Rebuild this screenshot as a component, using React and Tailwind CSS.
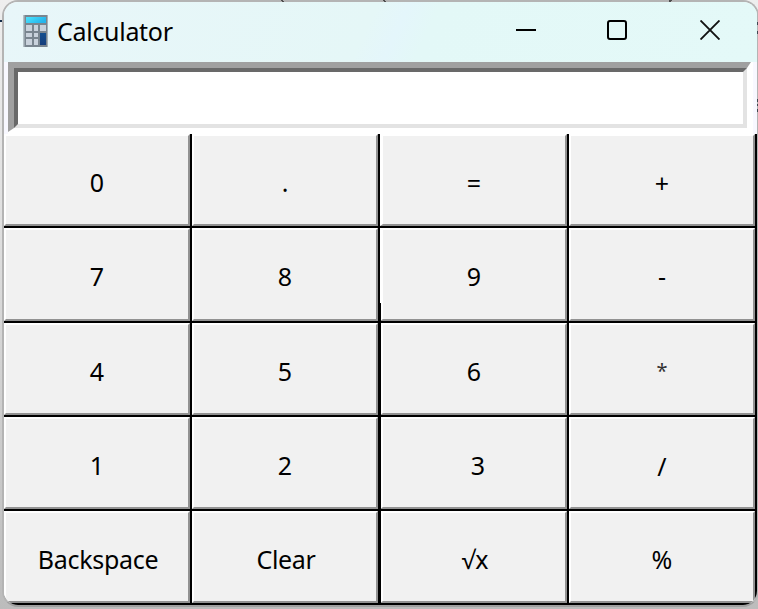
const ROWS = [
  ["0", ".", "=", "+"],
  ["7", "8", "9", "-"],
  ["4", "5", "6", "*"],
  ["1", "2", "3", "/"],
  ["Backspace", "Clear", "√x", "%"],
];

const LABEL_STYLES = {
  "3": "pl-2 pt-[3px] text-[25px]",
  "√x": "pl-[2px] pt-[3px] text-[25px]",
  "*": "pt-1 text-[20px] text-[#333]",
  "=": "pt-[5px] text-[25px]",
  "+": "pt-[5px] text-[25px]",
  "/": "pt-[5px] text-[25px]",
  Backspace: "pl-[2px] pt-[3px] text-[25px] tracking-[-0.3px]",
  Clear: "pl-[2px] pt-[3px] text-[25px] tracking-[-0.3px]",
};

function CalculatorIcon() {
  return (
    <svg width="26" height="33" viewBox="0 0 26 33" className="shrink-0">
      <defs>
        <linearGradient id="screen" x1="0" y1="0" x2="1" y2="0.4">
          <stop offset="0" stopColor="#4be3fd" />
          <stop offset="1" stopColor="#25b5ec" />
        </linearGradient>
        <linearGradient id="equals" x1="0" y1="0" x2="0" y2="1">
          <stop offset="0" stopColor="#14508f" />
          <stop offset="1" stopColor="#153e7c" />
        </linearGradient>
      </defs>
      <rect x="0.5" y="0" width="24.5" height="32" fill="#79858f" />
      <rect x="0.5" y="0" width="1" height="32" fill="#b5c2c8" />
      <rect x="24" y="0" width="1" height="32" fill="#a5b1b8" />
      <rect x="3" y="2" width="20" height="6" fill="url(#screen)" />
      <g fill="#c9d2dc">
        <rect x="3" y="10" width="6" height="6" />
        <rect x="11" y="10" width="4" height="6" />
        <rect x="17" y="10" width="6" height="6" />
        <rect x="3" y="18" width="6" height="4" />
        <rect x="11" y="18" width="4" height="4" />
        <rect x="3" y="24" width="6" height="6" />
        <rect x="11" y="24" width="4" height="6" />
      </g>
      <rect x="17" y="18" width="6" height="12" fill="url(#equals)" />
    </svg>
  );
}

function TitleBar() {
  return (
    <header className="flex h-[60px] shrink-0 items-start bg-[linear-gradient(115deg,#e8f6f9_0%,#e5f7f7_48%,#e4f6fb_52%,#e3f8f7_56%,#e4f9f8_100%)]">
      <div className="flex pl-[19px] pt-[13px]">
        <CalculatorIcon />
      </div>
      <h1 className="ml-2 pt-3 text-[25px] leading-[34px] tracking-[-0.3px] text-black">Calculator</h1>
      <div className="ml-auto flex pr-[37px] pt-[18px]">
        <svg width="20" height="20" viewBox="0 0 20 20">
          <path d="M0 10H20" stroke="#000" strokeWidth="2" />
        </svg>
        <svg width="20" height="20" viewBox="0 0 20 20" className="ml-[71px] mr-[73px]">
          <rect x="1" y="1" width="18" height="18" rx="2" fill="none" stroke="#000" strokeWidth="2" />
        </svg>
        <svg width="20" height="20" viewBox="0 0 20 20">
          <path d="M0.5 0.5L19.5 19.5M19.5 0.5L0.5 19.5" stroke="#111" strokeWidth="1.9" />
        </svg>
      </div>
    </header>
  );
}

function Display() {
  return (
    <div className="h-[72px] shrink-0 border-x-4 border-[#f8f8ff] bg-white pr-[2px]">
      <div className="h-[70px] border-b-4 border-l-[6px] border-r-4 border-t-[6px] border-b-white border-l-[#a0a0a0] border-r-white border-t-[#a0a0a0]">
        <div className="h-full border-4 border-b-[#e3e3e3] border-l-[#696969] border-r-[#e3e3e3] border-t-[#696969]" />
      </div>
    </div>
  );
}

function Key({ label, column }) {
  return (
    <button className="flex border-b-2 border-r-2 border-black">
      <span
        className={`flex h-full w-full items-center justify-center border-2 border-b-[#929292] border-l-white border-r-[#929292] border-t-white bg-[#f1f1f1] ${column === 2 ? "border-l-[3px]" : ""}`}
      >
        <span className={`leading-[34px] ${LABEL_STYLES[label] || "pt-[3px] text-[25px]"}`}>{label}</span>
      </span>
    </button>
  );
}

/* Slivers of the page behind the window, and the doubled divider of the third column. */
function EdgeDetails() {
  return (
    <svg width="758" height="609" className="pointer-events-none absolute inset-0" shapeRendering="crispEdges">
      <path d="M281 0h2l1 2h-2zM383 0h2l1 2h-2zM669 0h3l-1 2h-2z" fill="#4d4d4d" />
      <path d="M0 20h2v2h-2z" fill="#122b48" />
      <path d="M757 22h1v3h-1zM757 31h1v3h-1zM757 99h1v3h-1zM757 104h1v2h-1zM757 109h1v3h-1z" fill="#3f4650" />
      <path d="M380 303h1v302h-1z" fill="#000" />
    </svg>
  );
}

export default function App() {
  return (
    <main className="relative h-[609px] w-[758px] overflow-hidden bg-[linear-gradient(#eeeeee_0%,#dedede_40%,#bcbcbc_100%)] pl-[2px] font-['Noto_Sans','Open_Sans',sans-serif] text-black">
      <div className="flex h-[607px] w-[757px] flex-col overflow-hidden rounded-[16px] border-2 border-[#b4b4b4] border-b-[#a0a0a0] bg-white">
        <TitleBar />
        <Display />
        <div className="grid h-[471px] shrink-0 grid-cols-[188px_188px_189px_188px] grid-rows-[94px_95px_94px_94px_94px]">
          {ROWS.flatMap((row) => row.map((label, column) => <Key key={label} label={label} column={column} />))}
        </div>
      </div>
      <EdgeDetails />
    </main>
  );
}
